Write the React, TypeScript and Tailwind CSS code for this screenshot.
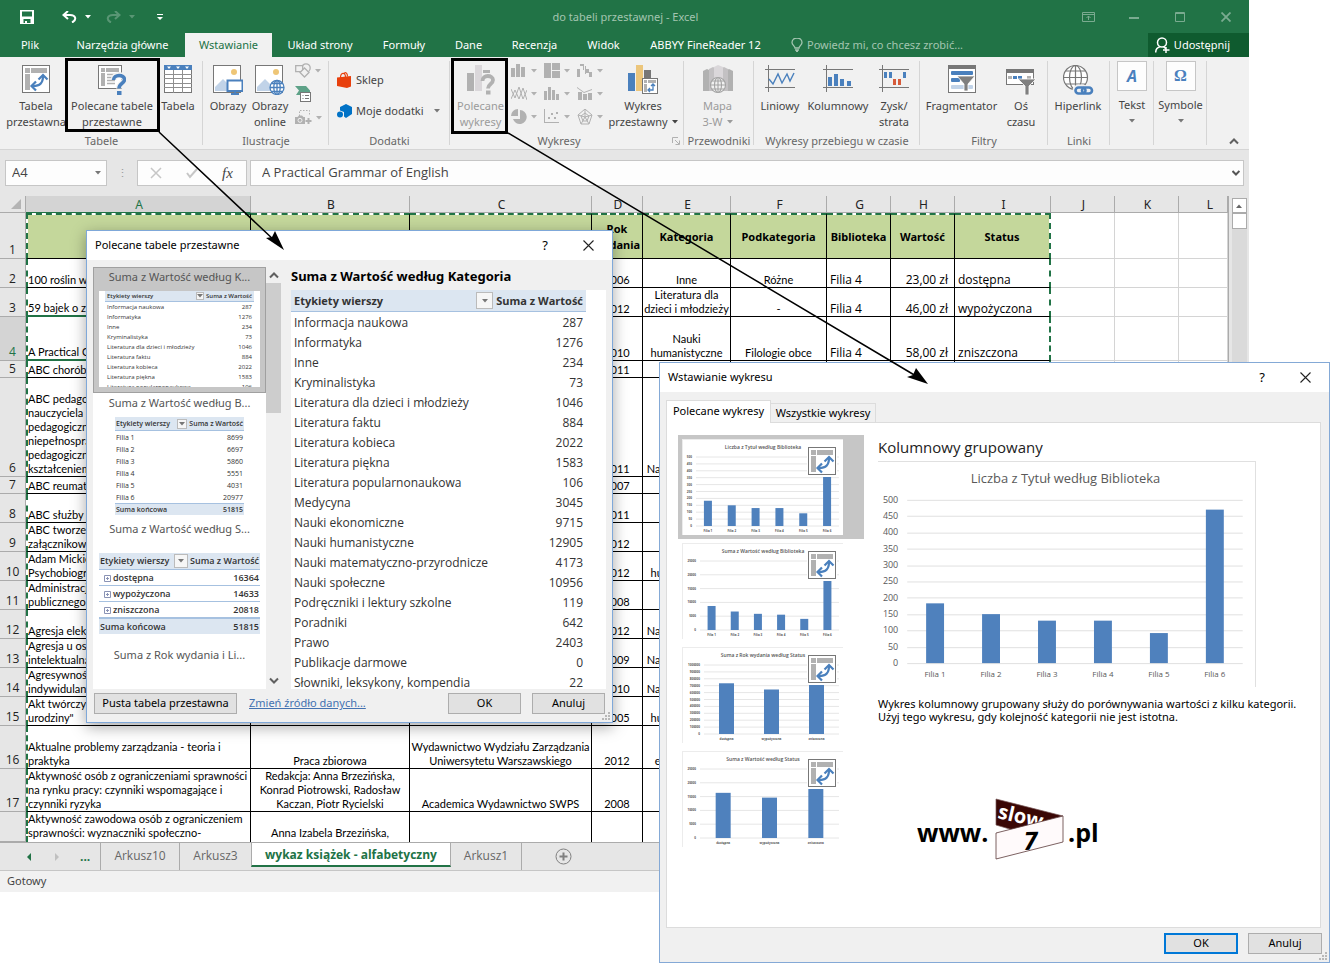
import { Fragment, type ReactNode } from "react";
import clsx from "clsx";

const BLUE = "#4a80bd";
const GRAY = "#777777";

/* ---------- small shared bits ---------- */

function Caret({ className }: { className?: string }) {
  return (
    <svg viewBox="0 0 6 4" className={clsx("h-1 w-1.5 shrink-0", className)} fill="currentColor">
      <path d="M0 0h6L3 3.5z" />
    </svg>
  );
}

function Chevron({ up, className }: { up?: boolean; className?: string }) {
  return (
    <svg viewBox="0 0 10 8" className={clsx("h-2 w-2.5 shrink-0", className)} fill="none" stroke="#606060" strokeWidth="2">
      <path d={up ? "M1 6.5 5 2.5l4 4" : "M1 1.5 5 5.5l4-4"} />
    </svg>
  );
}

function CloseIcon() {
  return (
    <svg viewBox="0 0 11 11" className="h-[11px] w-[11px]" stroke="#222" strokeWidth="1.1">
      <path d="M.5.5l10 10M10.5.5l-10 10" />
    </svg>
  );
}

function Grip() {
  return (
    <svg viewBox="0 0 8 8" className="absolute right-0.5 bottom-0.5 h-2 w-2" fill="#b8b8b8">
      <path d="M6 0h2v2H6zM3 3h2v2H3zM6 3h2v2H6zM0 6h2v2H0zM3 6h2v2H3zM6 6h2v2H6z" />
    </svg>
  );
}

/* ---------- ribbon icons ---------- */

function PivotIcon({ className }: { className?: string }) {
  return (
    <svg viewBox="0 0 28 28" className={clsx("h-7 w-7", className)}>
      <rect x=".5" y=".5" width="27" height="27" fill="#fff" stroke={GRAY} />
      <path d="M3 3h5v5H3zM9 3h16v5H9zM3 9h5v16H3z" fill="#b1b1b1" />
      <path d="M11 21c7 0 10-3 10-10" fill="none" stroke={BLUE} strokeWidth="2.2" />
      <path d="M14 16.500 9.500 21l4.500 4.500M16.500 14.500 21 10l4.500 4.500" fill="none" stroke={BLUE} strokeWidth="2.2" />
    </svg>
  );
}

function PivotHelpIcon() {
  return (
    <svg viewBox="0 0 28 30" className="h-[30px] w-7">
      <rect x=".5" y=".5" width="23" height="23" fill="#fff" stroke={GRAY} />
      <path d="M3 3h4v4H3zM8 3h13v4H8zM3 8h4v13H3z" fill="#b1b1b1" />
      <path d="M9 9.500h12M9 12.500h8M9 15.500h8M9 18.500h8" stroke="#b1b1b1" strokeWidth="1.500" />
      <path d="M15.500 15c0-7 11-6 11-.5 0 4-5.500 4-5.500 9" fill="none" stroke="#f1f1f1" strokeWidth="6" />
      <path d="M15.500 15c0-6 11-6 11-.5 0 4-5.500 4-5.500 9" fill="none" stroke={BLUE} strokeWidth="3.600" />
      <rect x="19" y="26" width="4.500" height="4" fill={BLUE} />
    </svg>
  );
}

function TableIcon() {
  return (
    <svg viewBox="0 0 28 28" className="h-7 w-7">
      <rect x=".5" y=".5" width="27" height="27" fill="#fff" stroke={GRAY} />
      <path d="M0 0h28v5H0z" fill={BLUE} />
      <path d="M3 1.500h4L5 4zM12 1.500h4L14 4zM21 1.500h4L23 4z" fill="#fff" />
      <path d="M9.500 5v23M18.500 5v23M0 9.500h28M0 13.500h28M0 18.500h28M0 22.500h28" stroke="#8f8f8f" />
    </svg>
  );
}

function PictureIcon({ online }: { online?: boolean }) {
  return (
    <svg viewBox="0 0 30 30" className="h-[30px] w-[30px]">
      <rect x=".5" y=".5" width="27" height="27" fill="#fff" stroke={GRAY} />
      <path d="M2 26v-4l8-8 8 8v4z" fill="#c1d3e8" />
      <circle cx="21" cy="7" r="3" fill="#eec677" />
      {online ? (
        <g fill="#fff" stroke={BLUE} strokeWidth="1.300">
          <circle cx="22" cy="22.500" r="7" />
          <ellipse cx="22" cy="22.500" rx="3.200" ry="7" />
          <path d="M15 22.500h14M16.500 18.500h11M16.500 26.500h11M22 15.500v14" />
        </g>
      ) : (
        <g>
          <rect x="14.500" y="15.500" width="15" height="10.500" fill="#fff" stroke={BLUE} strokeWidth="2" />
          <path d="M18 29h8M22 26v3" stroke={BLUE} strokeWidth="2" />
        </g>
      )}
    </svg>
  );
}

function ShapesIcon() {
  return (
    <svg viewBox="0 0 16 15" className="h-[15px] w-4" fill="#f1f1f1" stroke="#b1b1b1" strokeWidth="1.300">
      <circle cx="11" cy="5" r="4.200" />
      <path d="M.7 2.700h7v6h-7z" />
      <path d="m9.500 5 4.500 4.500-4.500 4.500L5 9.500z" />
    </svg>
  );
}

function SmartArtIcon() {
  return (
    <svg viewBox="0 0 17 16" className="h-4 w-[17px]">
      <path d="M0 0h11l4 4.500V6H5v3H1l3-4.500z" fill="#5ea288" />
      <rect x="5.500" y="6.500" width="10" height="9" fill="#fff" stroke={GRAY} />
      <path d="M7.500 9.500h1M7.500 12.500h1M10 9.500h4M10 12.500h4" stroke={GRAY} />
    </svg>
  );
}

function ScreenshotIcon() {
  return (
    <svg viewBox="0 0 17 16" className="h-4 w-[17px]">
      <path d="M4.500 6V.5h10V6" fill="none" stroke="#b1b1b1" strokeDasharray="1.500 1.500" />
      <path d="M0 7h2.500L4 5.500h3L8.500 7H10v7H0z" fill="#b1b1b1" />
      <circle cx="5" cy="10.300" r="2" fill="#b1b1b1" stroke="#f1f1f1" />
      <path d="M10.500 11h6M13.500 8v6" stroke="#b1b1b1" strokeWidth="2" />
    </svg>
  );
}

function StoreIcon() {
  return (
    <svg viewBox="0 0 15 16" className="h-4 w-[15px]">
      <path d="M0 5.500 14 4v10.500L10 16 0 14z" fill="#e8400d" />
      <path d="M3.500 6c0-6 5-6 5-1M6.500 2c2-2.500 4-1 4 2.500" fill="none" stroke="#e8400d" strokeWidth="1.200" />
    </svg>
  );
}

function AddinsIcon() {
  return (
    <svg viewBox="0 0 15 14" className="h-3.5 w-[15px]" fill="#0072c6">
      <path d="M3 3 9 0l6 3v7l-6 4-2-1.500V8L3 6.500z" />
      <circle cx="3" cy="10.500" r="3" />
    </svg>
  );
}

function ChartHelpIcon() {
  return (
    <svg viewBox="0 0 28 30" className="h-[30px] w-7">
      <path d="M0 8h7v18H0z" fill="#b1b1b1" />
      <path d="M8 0h7v26H8z" fill="#dad7da" />
      <path d="M16 5h7v3h-7z" fill="#b1b1b1" />
      <path d="M15.500 16c0-7 10.500-6 10.500-1 0 4-5 4-5 8.500" fill="none" stroke="#b1b1b1" strokeWidth="3.800" />
      <rect x="19" y="25.500" width="4.500" height="4" fill="#b1b1b1" />
    </svg>
  );
}

function PivotChartIcon() {
  return (
    <svg viewBox="0 0 31 29" className="h-[29px] w-[31px]">
      <path d="M0 8h7v18H0z" fill={BLUE} />
      <path d="M8 0h7v26H8z" fill="#ecc67c" />
      <path d="M16 5h7v9h-7z" fill={GRAY} />
      <rect x="14.500" y="13.500" width="15" height="15" fill="#fff" stroke={GRAY} />
      <path d="M16 15h3v3h-3zM20 15h8v3h-8zM16 19h3v8h-3z" fill="#b1b1b1" />
      <path d="M20 25h5v-6M22 23l-2 2 2 2M23 21l2-2 2 2" fill="none" stroke={BLUE} strokeWidth="1.300" />
    </svg>
  );
}

function MapIcon() {
  return (
    <svg viewBox="0 0 30 29" className="h-[29px] w-[30px]">
      <path d="M0 6l4-2 4 2v20H0zM22 6l4-2 4 2v20h-8z" fill="#b1b1b1" />
      <path d="M6 4l4-2 4 2v22H6zM17 4l4-2 4 2v22h-8z" fill="#c3c1c3" />
      <path d="M11 2l4-2 5 2v22h-9z" fill="#dad7da" />
      <g fill="#f1f1f1" stroke="#a3a3a3" strokeWidth="1.100">
        <circle cx="15" cy="20" r="7.500" />
        <ellipse cx="15" cy="20" rx="3.500" ry="7.500" />
        <path d="M7.500 20h15M9 16h12M9 24h12M15 12.500v15" />
      </g>
    </svg>
  );
}

function SparkIcon({ kind }: { kind: "line" | "column" | "winloss" }) {
  return (
    <svg viewBox="0 0 30 27" className="h-[27px] w-[30px]">
      <path d="M0 4.500h30M0 22.500h30M3.500 0v27" stroke={GRAY} fill="none" />
      {kind === "line" && <path d="m4 14 4 5 5-10 4 9 5-9 3 7 4-8" fill="none" stroke={BLUE} strokeWidth="1.400" />}
      {kind === "column" && <path d="M5 12h4v9H5zM11 9h4v12h-4zM17 14h4v7h-4zM24 16h4v5h-4z" fill={BLUE} />}
      {kind === "winloss" && (
        <g>
          <path d="M5 7h3v6H5zM10 7h3v6h-3zM24 7h3v6h-3z" fill={BLUE} />
          <path d="M14 14h3v6h-3zM19 14h3v6h-3z" fill="#d65b3a" />
        </g>
      )}
    </svg>
  );
}

function SlicerIcon() {
  return (
    <svg viewBox="0 0 28 28" className="h-7 w-7">
      <rect x=".5" y=".5" width="27" height="27" fill="#fff" stroke={GRAY} />
      <path d="M0 0h28v4H0z" fill={GRAY} />
      <rect x="3" y="6" width="22" height="4" rx="1" fill={BLUE} />
      <rect x="3" y="13" width="9" height="4" rx="1" fill={BLUE} />
      <rect x="3" y="20" width="22" height="4" rx="1" fill="#c1d3e8" />
      <path d="M9 11h18l-7 8v7h-4v-7z" fill="#7f7f7f" stroke="#fff" strokeWidth=".8" />
    </svg>
  );
}

function TimelineIcon() {
  return (
    <svg viewBox="0 0 30 30" className="h-[30px] w-[30px]">
      <rect x=".5" y="4.500" width="27" height="15" fill="#fff" stroke={GRAY} />
      <path d="M0 4h28v4H0z" fill={GRAY} />
      <path d="M2 11h4v3H2zM21 11h4v3h-4z" fill="#b1b1b1" />
      <path d="M7 11h4v3H7zM12 11h4v3h-4z" fill={BLUE} />
      <path d="M12 14h18l-7 7v9h-4v-9z" fill="#7f7f7f" stroke="#fff" strokeWidth=".8" />
    </svg>
  );
}

function LinkIcon() {
  return (
    <svg viewBox="0 0 31 31" className="h-[31px] w-[31px]">
      <g fill="#fff" stroke={GRAY} strokeWidth="1.200">
        <circle cx="12.500" cy="12.500" r="12" />
        <ellipse cx="12.500" cy="12.500" rx="6" ry="12" fill="none" />
        <path d="M.5 12.500h24M2.500 6h20M2.500 19h20M12.500 .5v24" />
      </g>
      <g fill="none" strokeWidth="6" stroke="#f1f1f1">
        <rect x="12.500" y="22.500" width="10" height="6" rx="3" />
      </g>
      <g fill="none" stroke={BLUE} strokeWidth="2.600">
        <rect x="12.500" y="22.500" width="10" height="6" rx="3" />
        <rect x="19" y="22.500" width="10" height="6" rx="3" />
      </g>
    </svg>
  );
}

const chartGlyphs: ReactNode[] = [
  <path key="col" d="M0 5h4v9H0zM5 1h4v13H5zM10 4h4v10h-4z" />,
  <path key="tree" d="M0 0h7v15H0zM8 0h8v7H8zM8 8h8v7H8z" />,
  <path key="fall" d="M0 6h3v8H0zM3 1h4v6H6V3H3zM8 3h1v8H8zM9 6h3v4H9zM12 9h3v5h-3z" />,
  <path key="line" d="m0 13 4-9 4 9 4-11 4 12M0 3l4 9 4-11 4 12 4-9" fill="none" stroke="currentColor" />,
  <path key="hist" d="M0 5h3v9H0zM4 1h3v13H4zM8 4h3v10H8zM12 8h3v6h-3z" />,
  <path key="combo" d="M1 6h4v8H1zM6 8h4v6H6zM11 7h4v7h-4zM0 1l7 5 8-3v1L7 7 0 2z" />,
  <path key="pie" d="M7 0v7H0A7 7 0 0 1 7 0zM9 1a7 7 0 1 1-7 9h7z" />,
  <path key="xy" d="M1 0v13h14v1H0V0zM4 8h2v2H4zM7 4h2v2H7zM10 8h2v2h-2zM12 3h2v2h-2z" />,
  <path key="radar" d="m8 0 7 6-3 9H4L1 6zM8 4l4 3-2 5H6L4 7zM8 0v8l7-2M8 8l4 7M8 8l-4 7M8 8 1 6" fill="none" stroke="currentColor" />,
];

/* ---------- ribbon ---------- */

type RibbonButtonProps = { icon: ReactNode; label: string; width: string; muted?: boolean; caret?: boolean };

function RibbonButton({ icon, label, width, muted, caret }: RibbonButtonProps) {
  return (
    <button className={clsx("flex shrink-0 flex-col items-center pt-2", width, muted ? "text-[#9b9b9b]" : "text-[#444]")}>
      <span className="flex h-[33px] items-start">{icon}</span>
      <span className="leading-4 whitespace-pre">
        {label}
        {caret && <Caret className="mb-0.5 ml-1 inline-block" />}
      </span>
    </button>
  );
}

function Group({ title, width, launcher, children }: { title: string; width: string; launcher?: boolean; children: ReactNode }) {
  return (
    <section className={clsx("relative flex h-[92px] shrink-0 flex-col", width)}>
      <div className="flex flex-1">{children}</div>
      <div className="flex items-center">
        <h2 className="h-4 flex-1 text-center leading-4 whitespace-nowrap text-[#666]">{title}</h2>
        {launcher && (
          <button aria-label="Więcej opcji" className="mr-1 ml-1">
            <svg viewBox="0 0 8 8" className="h-2 w-2" fill="none" stroke="#b1b1b1"><path d="M.5 6V.5H6M3 3l4 4M7.500 3.500v4h-4" /></svg>
          </button>
        )}
      </div>
      <span className="absolute top-1 right-0 bottom-1 w-px bg-[#d5d5d5]" />
    </section>
  );
}

function Ribbon() {
  return (
    <div className="flex border-b border-[#d5d5d5] bg-[#f1f1f1]">
      <Group title="Tabele" width="w-[203px]">
        <RibbonButton width="ml-1.5 w-[60px]" label={"Tabela\nprzestawna"} icon={<PivotIcon />} />
        <RibbonButton width="w-[92px]" label={"Polecane tabele\nprzestawne"} icon={<PivotHelpIcon />} />
        <RibbonButton width="w-10" label="Tabela" icon={<TableIcon />} />
      </Group>
      <Group title="Ilustracje" width="w-[126px]">
        <RibbonButton width="ml-1 w-[42px]" label="Obrazy" icon={<PictureIcon />} />
        <RibbonButton width="w-[42px]" label={"Obrazy\nonline"} icon={<PictureIcon online />} />
        <div className="flex flex-col gap-2 pt-1.5 pl-1 text-[#b1b1b1]">
          <button className="flex items-center gap-1"><ShapesIcon /><Caret /></button>
          <button className="flex items-center gap-1"><SmartArtIcon /></button>
          <button className="flex items-center gap-1"><ScreenshotIcon /><Caret /></button>
        </div>
      </Group>
      <Group title="Dodatki" width="w-[121px]">
        <div className="flex flex-col gap-[15px] pt-[15px] pl-2 text-[#444]">
          <button className="flex h-4 items-center gap-1"><StoreIcon />Sklep</button>
          <button className="flex h-4 items-center gap-1 whitespace-nowrap"><AddinsIcon />Moje dodatki<Caret className="ml-1.5 text-[#777]" /></button>
        </div>
      </Group>
      <Group title="Wykresy" width="w-[234px]" launcher>
        <RibbonButton muted width="ml-0.5 w-[57px]" label={"Polecane\nwykresy"} icon={<ChartHelpIcon />} />
        <div className="grid h-[75px] w-[101px] shrink-0 grid-cols-3 pt-1.5 pl-0.5 text-[#b1b1b1]">
          {chartGlyphs.map((glyph, i) => (
            <button key={i} className="flex h-[23px] items-start gap-1">
              <svg viewBox="0 0 16 16" className="h-4 w-4" fill="currentColor">{glyph}</svg>
              <Caret className="mt-1.5" />
            </button>
          ))}
        </div>
        <RibbonButton caret width="w-[66px]" label={"Wykres\nprzestawny"} icon={<PivotChartIcon />} />
      </Group>
      <Group title="Przewodniki" width="w-[70px]">
        <RibbonButton muted caret width="w-[67px]" label={"Mapa\n3-W"} icon={<MapIcon />} />
      </Group>
      <Group title="Wykresy przebiegu w czasie" width="w-[166px]">
        <RibbonButton width="w-[52px]" label="Liniowy" icon={<SparkIcon kind="line" />} />
        <RibbonButton width="w-16" label="Kolumnowy" icon={<SparkIcon kind="column" />} />
        <RibbonButton width="w-12" label={"Zysk/\nstrata"} icon={<SparkIcon kind="winloss" />} />
      </Group>
      <Group title="Filtry" width="w-[128px]">
        <RibbonButton width="w-[83px]" label="Fragmentator" icon={<SlicerIcon />} />
        <RibbonButton width="w-9" label={"Oś\nczasu"} icon={<TimelineIcon />} />
      </Group>
      <Group title="Linki" width="w-[62px]">
        <RibbonButton width="w-[60px]" label="Hiperlink" icon={<LinkIcon />} />
      </Group>
      {[
        { label: "Tekst", glyph: "A", width: "w-11", font: "font-['Open_Sans'] italic" },
        { label: "Symbole", glyph: "Ω", width: "w-[53px]", font: "font-['Liberation_Serif']" },
      ].map((item) => (
        <Group key={item.label} title="" width={item.width}>
          <button className="flex w-full flex-col items-center gap-1.5 pt-1 text-[#444]">
            <span className={clsx("flex h-[30px] w-[30px] items-center justify-center border border-[#c6c6c6] bg-[#fdfdfd] text-base font-bold text-[#4a80bd]", item.font)}>
              {item.glyph}
            </span>
            <span className="leading-4">{item.label}</span>
            <Caret className="text-[#777]" />
          </button>
        </Group>
      ))}
      <div className="flex flex-1 items-end justify-end pr-2.5 pb-1">
        <button aria-label="Zwiń wstążkę"><Chevron up /></button>
      </div>
    </div>
  );
}

function TitleBar() {
  return (
    <div className="flex h-[33px] items-center bg-[#217346] text-white">
      <div className="flex flex-1 items-center pl-5">
        <svg viewBox="0 0 14 14" className="h-3.5 w-3.5"><path d="M0 0h14v14H0zM2 1.500v5h10v-5zM3.500 9v4H5v-2h2v2h3.500V9z" fill="#fff" fillRule="evenodd" /></svg>
        <svg viewBox="0 0 15 12" className="ml-7 h-3 w-[15px]" fill="none" stroke="#fff" strokeWidth="2"><path d="M6 0 1.500 4 6 8M2 4h6c6 0 7 5 2 7.500" /></svg>
        <Caret className="ml-2" />
        <svg viewBox="0 0 15 12" className="ml-[15px] h-3 w-[15px] opacity-25" fill="none" stroke="#fff" strokeWidth="2"><path d="m9 0 4.500 4L9 8M13 4H7C1 4 0 9 5 11.500" /></svg>
        <Caret className="ml-2 opacity-25" />
        <svg viewBox="0 0 6 6" className="ml-[22px] h-1.5 w-1.5" fill="#fff"><path d="M0 0h6v1H0zM0 3h6L3 6z" /></svg>
      </div>
      <p className="pt-0.5 text-[#a3c5b0]">do tabeli przestawnej - Excel</p>
      <div className="flex flex-1 items-center justify-end gap-[34px] pr-[18px] opacity-40">
        <svg viewBox="0 0 13 10" className="h-2.5 w-[13px]" fill="none" stroke="#fff"><path d="M.5.5h12v9H.5zM.5 2.500h12M6.500 8V4M4.500 6l2-2 2 2" /></svg>
        <svg viewBox="0 0 10 10" className="h-2.5 w-2.5" stroke="#fff" strokeWidth="2"><path d="M0 6h10" /></svg>
        <svg viewBox="0 0 10 10" className="ml-0.5 h-2.5 w-2.5" fill="none" stroke="#fff"><path d="M.5.5h9v9h-9zM0 1.500h10" /></svg>
        <svg viewBox="0 0 10 10" className="ml-0.5 h-2.5 w-2.5" stroke="#fff" strokeWidth="1.800"><path d="m.5.5 9 9m0-9-9 9" /></svg>
      </div>
    </div>
  );
}

const menuTabs = [
  { label: "Plik", width: "w-[60px]" },
  { label: "Narzędzia główne", width: "w-[125px]" },
  { label: "Wstawianie", width: "w-[87px]", active: true },
  { label: "Układ strony", width: "w-24" },
  { label: "Formuły", width: "w-[72px]" },
  { label: "Dane", width: "w-[57px]" },
  { label: "Recenzja", width: "w-[75px]" },
  { label: "Widok", width: "w-[63px]" },
  { label: "ABBYY FineReader 12", width: "w-[141px]" },
];

function MenuBar() {
  return (
    <nav className="flex h-6 bg-[#217346] text-white">
      {menuTabs.map((tab) => (
        <button key={tab.label} className={clsx("shrink-0 whitespace-nowrap", tab.width, tab.active && "bg-[#f1f1f1] text-[#217346]")}>
          {tab.label}
        </button>
      ))}
      <button className="ml-[15px] flex items-center gap-1 whitespace-nowrap text-[#a3c5b0]">
        <svg viewBox="0 0 12 14" className="h-3.5 w-3" fill="none" stroke="currentColor" strokeWidth="1.300"><path d="M4 10c0-2-3-3-3-5.500a5 4.500 0 0 1 10 0C11 7 8 8 8 10zM4 12h4M5 13.500h2" /></svg>
        Powiedz mi, co chcesz zrobić...
      </button>
      <button className="ml-auto flex items-center gap-1 bg-[#0f5b2f] pr-[19px] pl-[7px]">
        <svg viewBox="0 0 15 16" className="h-4 w-[15px]" fill="none" stroke="#fff" strokeWidth="1.500"><circle cx="7" cy="5.500" r="4.500" /><path d="M.7 15.500c0-3.500 2-5 4-5.500M8.500 9.500l2 2M11 10v6M8 13h6.500" /></svg>
        Udostępnij
      </button>
    </nav>
  );
}

function FormulaBar() {
  return (
    <div className="flex h-[46px] items-center gap-[3px] bg-[#e6e6e6] pr-[5px] pl-[5px] font-['Open_Sans',sans-serif] text-[#444]">
      <div className="flex h-[26px] w-[102px] items-center border border-[#c6c6c6] bg-[#fdfdfd] pr-1">
        <input aria-label="Pole nazwy" defaultValue="A4" className="w-full bg-transparent pl-1.5 text-[13px] outline-none" />
        <Caret className="w-2 text-[#777]" />
      </div>
      <span className="w-6 text-center text-[#999]">⋮</span>
      <div className="flex h-[26px] w-[110px] items-center gap-6 border border-[#c6c6c6] bg-[#fdfdfd] pl-3">
        <svg viewBox="0 0 12 12" className="h-3 w-3" stroke="#c6c6c6" strokeWidth="1.500"><path d="m1 1 10 10M11 1 1 11" /></svg>
        <svg viewBox="0 0 12 12" className="h-3 w-3" fill="none" stroke="#c6c6c6" strokeWidth="2"><path d="m1 6 3 4 7-8" /></svg>
        <button className="font-['Liberation_Serif'] text-[15px] italic">fx</button>
      </div>
      <div className="flex h-[26px] flex-1 items-center border border-[#c6c6c6] bg-[#fdfdfd] pr-[3px]">
        <input aria-label="Pasek formuły" defaultValue="A Practical Grammar of English" className="w-full bg-transparent pl-[11px] text-[13px] outline-none" />
        <svg viewBox="0 0 8 6" className="h-1.5 w-2" fill="none" stroke="#555" strokeWidth="2"><path d="m.5 1 3.500 3.500L7.500 1" /></svg>
      </div>
    </div>
  );
}

/* ---------- sheet ---------- */

type Row = { n: number; h: string; cells: string[] };

const headers = ["Tytuł", "Autor", "Wydawnictwo", "Rok\nwydania", "Kategoria", "Podkategoria", "Biblioteka", "Wartość", "Status"];

const rows: Row[] = [
  { n: 2, h: "h-[29px]", cells: ["100 roślin w Twoim ogrodzie", "", "", "2006", "Inne", "Różne", "Filia 4", "23,00 zł", "dostępna"] },
  { n: 3, h: "h-[29px]", cells: ["59 bajek o zwierzętach", "", "", "2012", "Literatura dla\ndzieci i młodzieży", "-", "Filia 4", "46,00 zł", "wypożyczona"] },
  { n: 4, h: "h-11", cells: ["A Practical Grammar of English", "", "", "2010", "Nauki\nhumanistyczne", "Filologie obce", "Filia 4", "58,00 zł", "zniszczona"] },
  { n: 5, h: "h-[17px]", cells: ["ABC chorób", "", "", "2011", "", "", "", "", ""] },
  { n: 6, h: "h-[99px]", cells: ["ABC pedagoga i\nnauczyciela\npedagogiczne\nniepełnosprawność\npedagogiczna\nkształceniem", "", "", "2011", "Nauki społeczne", "", "", "", ""] },
  { n: 7, h: "h-[17px]", cells: ["ABC reumatologii", "", "", "2007", "", "", "", "", ""] },
  { n: 8, h: "h-[29px]", cells: ["ABC służby cywilnej", "", "", "2011", "", "", "", "", ""] },
  { n: 9, h: "h-[29px]", cells: ["ABC tworzenia\nzałącznikowego", "", "", "2012", "", "", "", "", ""] },
  { n: 10, h: "h-[29px]", cells: ["Adam Mickiewicz\nPsychobiografia", "", "", "2012", "humanistyczne", "", "", "", ""] },
  { n: 11, h: "h-[29px]", cells: ["Administracja\npublicznego", "", "", "2008", "", "", "", "", ""] },
  { n: 12, h: "h-[29px]", cells: ["Agresja elektroniczna", "", "", "2012", "Nauki społeczne", "", "", "", ""] },
  { n: 13, h: "h-[29px]", cells: ["Agresja u osób\nintelektualną", "", "", "2009", "Nauki społeczne", "", "", "", ""] },
  { n: 14, h: "h-[29px]", cells: ["Agresywność\nindywidulany", "", "", "2010", "Nauki społeczne", "", "", "", ""] },
  { n: 15, h: "h-[29px]", cells: ["Akt twórczy\nurodziny\"", "", "", "2005", "humanistyczne", "", "", "", ""] },
  { n: 16, h: "h-[43px]", cells: ["Aktualne problemy zarządzania - teoria i\npraktyka", "Praca zbiorowa", "Wydawnictwo Wydziału Zarządzania\nUniwersytetu Warszawskiego", "2012", "ekonomiczne", "", "", "", ""] },
  { n: 17, h: "h-[43px]", cells: ["Aktywność osób z ograniczeniami sprawności\nna rynku pracy: czynniki wspomagające i\nczynniki ryzyka", "Redakcja: Anna Brzezińska,\nKonrad Piotrowski, Radosław\nKaczan, Piotr Rycielski", "Academica Wydawnictwo SWPS", "2008", "", "", "", "", ""] },
];

// width of the row-number column followed by columns A-K; L takes what is left
const colWidths = ["w-[26px]", "w-[225px]", "w-[159px]", "w-[182px]", "w-[51px]", "w-[88px]", "w-24", "w-16", "w-16", "w-24", "w-16", "w-16", ""];

function RowNumber({ n }: { n: number }) {
  return (
    <th
      scope="row"
      className={clsx(
        "border-r border-b border-[#ababab] p-0 align-bottom font-['Open_Sans',sans-serif] text-xs leading-4 font-normal",
        n === 4 ? "bg-[#d4d4d4] text-[#217346]" : "bg-[#e6e6e6] text-[#222]",
      )}
    >
      {n < 18 ? n : ""}
    </th>
  );
}

function EmptyCells() {
  return (
    <>
      {["J", "K", "L"].map((c) => (
        <td key={c} className="border-r border-b border-[#d4d4d4] p-0" />
      ))}
    </>
  );
}

function Sheet() {
  return (
    <div className="flex bg-[#e6e6e6]">
      <table className="w-full flex-1 table-fixed border-separate border-spacing-0 bg-white">
        <colgroup>
          {colWidths.map((w, i) => (
            <col key={i} className={w} />
          ))}
        </colgroup>
        <thead>
          <tr className="h-[17px]">
            <th className="border-r border-b border-[#ababab] bg-[#e6e6e6] p-0">
              <svg viewBox="0 0 10 10" className="mr-1 ml-auto h-2.5 w-2.5"><path d="M10 0v10H0z" fill="#b4b4b4" /></svg>
            </th>
            {"ABCDEFGHIJKL".split("").map((c) => (
              <th
                key={c}
                scope="col"
                className={clsx(
                  "border-r border-b pt-0.5 pr-0 pb-0 text-xs leading-[14px] font-normal",
                  c === "L" ? "pl-3.5" : "pl-0.5",
                  c === "A" ? "border-r-[#ababab] border-b-[#217346] bg-[#d4d4d4] text-[#217346]" : "border-[#ababab] bg-[#e6e6e6] text-[#222]",
                )}
              >
                {c}
              </th>
            ))}
          </tr>
        </thead>
        <tbody className="font-['Lato',sans-serif] text-[11px] leading-[14px] text-black">
          <tr className="h-[46px]">
            <RowNumber n={1} />
            {headers.map((h, i) => (
              <td
                key={h}
                className={clsx(
                  "border-t-2 border-r border-b border-black border-t-[#217346] bg-[#c4d79b] bg-clip-padding p-0 text-center font-['Noto_Sans',sans-serif] leading-4 font-bold whitespace-pre [border-top-style:dashed]",
                  i === 0 && "border-l-2 border-l-[#217346] [border-left-style:dashed]",
                  i === 8 && "border-r-2 border-r-[#217346] [border-right-style:dashed]",
                )}
              >
                {h}
              </td>
            ))}
            <EmptyCells />
          </tr>
          {rows.map((row) => (
            <tr key={row.n} className={row.h}>
              <RowNumber n={row.n} />
              {row.cells.map((text, i) => (
                <td
                  key={i}
                  className={clsx(
                    "overflow-hidden border-r border-b border-black p-0 align-bottom whitespace-pre",
                    i === 0 && "border-l-2 border-l-[#217346] [border-left-style:dashed]",
                    i === 0 && (row.n === 3 || row.n === 4) && "border-b-2 border-b-[#217346]",
                    i > 0 && i < 6 && "text-center",
                    i > 5 && "font-['Open_Sans',sans-serif] text-xs leading-[14px]",
                    i === 6 && "pl-[3px]",
                    i === 7 && "pr-1.5 text-right",
                    i === 8 && "border-r-2 border-r-[#217346] pl-[3px] [border-right-style:dashed]",
                  )}
                >
                  {text}
                </td>
              ))}
              <EmptyCells />
            </tr>
          ))}
          <tr className="h-[30px]">
            <RowNumber n={18} />
            <td className="border-r border-l-2 border-black border-l-[#217346] p-0 align-top whitespace-pre [border-left-style:dashed]">
              <div className="h-[30px] overflow-hidden">{"Aktywność zawodowa osób z ograniczeniem\nsprawności: wyznaczniki społeczno-\ndemograficzne"}</div>
            </td>
            <td className="border-r border-black p-0 text-center align-top whitespace-pre">
              <div className="h-[30px] overflow-hidden pt-3.5">{"Anna Izabela Brzezińska,\nKonrad Piotrowski"}</div>
            </td>
            {headers.slice(2).map((h) => (
              <td key={h} className="border-r border-black p-0" />
            ))}
            <EmptyCells />
          </tr>
        </tbody>
      </table>
      <div className="flex w-[21px] flex-col items-center border-l border-[#ababab] pt-0.5">
        <button aria-label="W górę" className="flex h-[15px] w-[15px] items-center justify-center border border-[#ababab] bg-white text-[#666]">
          <Caret className="rotate-180" />
        </button>
        <div className="w-[15px] flex-1 bg-[#dadada]">
          <div className="h-4 border border-[#ababab] bg-white" />
        </div>
      </div>
    </div>
  );
}

function SheetTabs() {
  return (
    <div className="flex h-7 border-t border-[#ababab] bg-[#e6e6e6] font-['Open_Sans',sans-serif] text-xs text-[#666]">
      <div className="flex w-[101px] items-center border-r border-[#ababab] pl-[27px]">
        <svg viewBox="0 0 4 8" className="h-2 w-1" fill="#217346"><path d="M4 0v8L0 4z" /></svg>
        <svg viewBox="0 0 4 8" className="ml-6 h-2 w-1" fill="#c0c0c0"><path d="M0 0v8l4-4z" /></svg>
        <span className="ml-[21px] font-bold text-[#217346]">...</span>
      </div>
      <button className="w-[79px] border-r border-[#ababab] pb-0.5">Arkusz10</button>
      <button className="w-[71px] pb-0.5">Arkusz3</button>
      <button className="mb-[3px] w-[200px] border-x border-b-2 border-x-[#ababab] border-b-[#217346] bg-white pt-0.5 font-bold whitespace-nowrap text-[#217346]">
        wykaz książek - alfabetyczny
      </button>
      <button className="w-[71px] border-r border-[#ababab] pb-0.5">Arkusz1</button>
      <button aria-label="Nowy arkusz" className="ml-[33px]">
        <svg viewBox="0 0 17 17" className="h-[17px] w-[17px]" fill="none" stroke="#808080"><circle cx="8.500" cy="8.500" r="7.500" /><path d="M4.500 8.500h8M8.500 4.500v8" strokeWidth="2" /></svg>
      </button>
    </div>
  );
}

/* ---------- recommended pivot tables ---------- */

type Item = [string, string];

const categories: Item[] = [
  ["Informacja naukowa", "287"],
  ["Informatyka", "1276"],
  ["Inne", "234"],
  ["Kryminalistyka", "73"],
  ["Literatura dla dzieci i młodzieży", "1046"],
  ["Literatura faktu", "884"],
  ["Literatura kobieca", "2022"],
  ["Literatura piękna", "1583"],
  ["Literatura popularnonaukowa", "106"],
  ["Medycyna", "3045"],
  ["Nauki ekonomiczne", "9715"],
  ["Nauki humanistyczne", "12905"],
  ["Nauki matematyczno-przyrodnicze", "4173"],
  ["Nauki społeczne", "10956"],
  ["Podręczniki i lektury szkolne", "119"],
  ["Poradniki", "642"],
  ["Prawo", "2403"],
  ["Publikacje darmowe", "0"],
  ["Słowniki, leksykony, kompendia", "22"],
];

const branches: Item[] = [["Filia 1", "8699"], ["Filia 2", "6697"], ["Filia 3", "5860"], ["Filia 4", "5551"], ["Filia 5", "4031"], ["Filia 6", "20977"]];
const statuses: Item[] = [["dostępna", "16364"], ["wypożyczona", "14633"], ["zniszczona", "20818"]];

const pivotSizes = {
  xs: { text: "text-[6px] leading-[10px]", head: "h-[11px]", row: "h-2.5", box: "h-2 w-2", pad: "px-0.5", first: "w-[58%]" },
  sm: { text: "text-[7px] leading-[11px]", head: "h-3.5", row: "h-3", box: "h-2.5 w-2.5", pad: "px-px", first: "w-[45%]" },
  md: { text: "text-[9px] leading-[14px] font-semibold", head: "h-[17px]", row: "h-4", box: "h-3.5 w-3.5", pad: "px-px", first: "w-[46%]" },
  lg: { text: "text-xs leading-[19px]", head: "h-[22px] text-[11px]", row: "h-5", box: "h-[17px] w-[17px]", pad: "px-[3px]", first: "w-[60%]" },
};

type PivotProps = { size: keyof typeof pivotSizes; items: Item[]; total?: boolean; expandable?: boolean };

function PivotTable({ size, items, total, expandable }: PivotProps) {
  const s = pivotSizes[size];
  const weight = size === "lg" ? "font-bold" : "font-semibold";
  return (
    <table className={clsx("w-full table-fixed border-separate border-spacing-0 font-['Open_Sans',sans-serif] whitespace-nowrap text-[#333]", s.text)}>
      <thead>
        <tr className={clsx("bg-[#dce6f1]", weight, s.head)}>
          <th className={clsx("border-b border-[#a6c1e0] py-0 text-left", weight, s.pad, s.first)}>Etykiety wierszy</th>
          <th className={clsx("border-b border-[#a6c1e0] py-0", weight, s.pad)}>
            <span className={clsx("flex items-center justify-end", size === "lg" ? "gap-[3px]" : "gap-0.5")}>
              <span className={clsx("flex shrink-0 items-center justify-center border border-[#bbb] bg-[#f6f6f6] text-[#777]", s.box)}>
                <Caret className={size === "lg" ? "w-2" : "w-1"} />
              </span>
              Suma z Wartość
            </span>
          </th>
        </tr>
      </thead>
      <tbody>
        {items.map(([name, value]) => (
          <tr key={name} className={s.row}>
            <td className={clsx("py-0", s.pad, expandable && "border-b border-[#a6c1e0]")}>
              {expandable && (
                <svg viewBox="0 0 7 7" className="mr-0.5 ml-1 inline h-[7px] w-[7px]" fill="none" stroke="#8a93b5"><path d="M.5.5h6v6h-6zM2 3.500h3M3.500 2v3" /></svg>
              )}
              {name}
            </td>
            <td className={clsx("py-0 text-right", s.pad, expandable && "border-b border-[#a6c1e0]")}>{value}</td>
          </tr>
        ))}
        {total && (
          <tr className={clsx("bg-[#dce6f1]", weight, s.row)}>
            <td className={clsx("border-t border-[#a6c1e0] py-0", s.pad)}>Suma końcowa</td>
            <td className={clsx("border-t border-[#a6c1e0] py-0 text-right", s.pad)}>51815</td>
          </tr>
        )}
      </tbody>
    </table>
  );
}

function DialogTitle({ children }: { children: string }) {
  return (
    <div className="flex h-[29px] shrink-0 items-center bg-white pl-2 text-black">
      <h2 className="flex-1">{children}</h2>
      <button className="mr-[35px] text-[13px]">?</button>
      <button aria-label="Zamknij" className="mr-[18px]"><CloseIcon /></button>
    </div>
  );
}

function DialogButton({ children, width, primary }: { children: string; width: string; primary?: boolean }) {
  return (
    <button className={clsx("h-[21px] bg-[#e1e1e1] text-black", width, primary ? "border-2 border-[#0078d7]" : "border border-[#adadad]")}>
      {children}
    </button>
  );
}

function PreviewTitle({ children }: { children: string }) {
  return <h3 className="h-[23px] text-center leading-[17px] whitespace-nowrap text-[#555]">{children}</h3>;
}

function PivotDialog() {
  return (
    <section className="absolute top-[230px] left-[86px] h-[493px] w-[527px] overflow-hidden border border-[#7fa8d9] bg-[#f0f0f0] shadow-[0_4px_14px_rgba(0,0,0,0.35)]">
      <DialogTitle>Polecane tabele przestawne</DialogTitle>
      <div className="flex pt-[7px] pr-1.5 pl-1.5">
        <div className="h-[422px] w-[173px] shrink-0 overflow-hidden bg-white">
          <div className="h-[126px] border border-[#a0a0a0] bg-[#c6c6c6] px-[5px]">
            <PreviewTitle>Suma z Wartość według K...</PreviewTitle>
            <div className="h-24 overflow-hidden bg-white px-1.5">
              <PivotTable size="xs" items={categories} />
            </div>
          </div>
          <div className="h-[126px] pt-px">
            <PreviewTitle>Suma z Wartość według B...</PreviewTitle>
            <div className="px-[22px]">
              <PivotTable size="sm" items={branches} total />
            </div>
          </div>
          <div className="h-[126px] px-1.5 pt-px">
            <PreviewTitle>Suma z Wartość według S...</PreviewTitle>
            <div className="pt-2.5">
              <PivotTable size="md" items={statuses} total expandable />
            </div>
          </div>
          <div className="pt-px">
            <PreviewTitle>Suma z Rok wydania i Li...</PreviewTitle>
          </div>
        </div>
        <div className="flex h-[422px] w-[15px] shrink-0 flex-col items-center">
          <Chevron up className="my-1" />
          <div className="h-[130px] w-full bg-[#cdcdcd]" />
          <Chevron className="mt-auto mb-1" />
        </div>
        <div className="ml-2.5 flex-1">
          <h3 className="h-[23px] text-[13px] leading-[19px] font-bold whitespace-nowrap text-black">Suma z Wartość według Kategoria</h3>
          <div className="h-[399px] overflow-hidden bg-white pr-5">
            <PivotTable size="lg" items={categories} />
          </div>
        </div>
      </div>
      <div className="flex items-center pt-1 pr-[7px] pl-[7px]">
        <DialogButton width="w-[143px]">Pusta tabela przestawna</DialogButton>
        <a href="#zrodlo" className="ml-3 text-[#4472b0] underline">Zmień źródło danych...</a>
        <div className="ml-auto flex gap-[11px]">
          <DialogButton width="w-[73px]">OK</DialogButton>
          <DialogButton width="w-[73px]">Anuluj</DialogButton>
        </div>
      </div>
      <Grip />
    </section>
  );
}

/* ---------- insert chart ---------- */

type Chart = { title: string; max: number; step: number; left: number; bar: number; values: number[]; labels: string[] };

const branchLabels = branches.map(([name]) => name);
const statusLabels = statuses.map(([name]) => name);

const charts: Chart[] = [
  { title: "Liczba z Tytuł według Biblioteka", max: 500, step: 50, left: 13, bar: 8, values: [183, 150, 130, 130, 92, 470], labels: branchLabels },
  { title: "Suma z Wartość według Biblioteka", max: 25000, step: 5000, left: 17, bar: 8, values: [8699, 6697, 5860, 5551, 4031, 20977], labels: branchLabels },
  { title: "Suma z Rok wydania według Status", max: 1000000, step: 100000, left: 21, bar: 15, values: [735000, 645000, 890000], labels: statusLabels },
  { title: "Suma z Wartość według Status", max: 25000, step: 5000, left: 17, bar: 15, values: [16364, 14633, 20818], labels: statusLabels },
];

const ticks = (max: number, step: number) => Array.from({ length: max / step + 1 }, (_, i) => i * step);

function ChartThumb({ chart }: { chart: Chart }) {
  const top = 17;
  const bottom = 86;
  const slot = (156 - chart.left) / chart.values.length;
  const y = (v: number) => bottom - (v / chart.max) * (bottom - top);
  return (
    <div className="relative h-24 w-[161px] border-t border-l border-[#ececec] bg-white">
      <svg viewBox="0 0 161 96" className="h-24 w-[161px]" fontFamily="Open Sans, sans-serif" fill="#555">
        <text x="80" y="9" fontSize="5" fontWeight="600" textAnchor="middle">{chart.title}</text>
        {ticks(chart.max, chart.step).map((t) => (
          <Fragment key={t}>
            <path d={`M${chart.left} ${y(t)}H156`} stroke="#e6e6e6" />
            <text x={chart.left - 4} y={y(t) + 1} fontSize="3" fontWeight="700" textAnchor="end">{t}</text>
          </Fragment>
        ))}
        {chart.values.map((v, i) => (
          <Fragment key={i}>
            <rect x={chart.left + slot * (i + 0.5) - chart.bar / 2} y={y(v)} width={chart.bar} height={bottom - y(v)} fill="#4f81bd" />
            <text x={chart.left + slot * (i + 0.5)} y="92" fontSize="3" fontWeight="700" textAnchor="middle">{chart.labels[i]}</text>
          </Fragment>
        ))}
      </svg>
      <span className="absolute top-1.5 right-1.5 bg-white p-px pb-0.5"><PivotIcon /></span>
    </div>
  );
}

function MainChart() {
  const chart = charts[0];
  const y = (v: number) => 202 - (v / 500) * 164;
  return (
    <svg viewBox="0 0 378 226" className="h-[226px] w-[378px] border-t border-r border-[#e0e0e0]" fontFamily="Open Sans, sans-serif" fill="#595959">
      <text x="188" y="21" fontSize="13" textAnchor="middle">{chart.title}</text>
      {ticks(500, 50).map((t) => (
        <Fragment key={t}>
          <path d={`M29 ${Math.round(y(t)) + 0.5}H366`} stroke="#e0e0e0" />
          <text x="20" y={y(t) + 3} fontSize="9" textAnchor="end">{t}</text>
        </Fragment>
      ))}
      {chart.values.map((v, i) => (
        <Fragment key={i}>
          <rect x={48 + i * 56.2} y={y(v)} width="18" height={202 - y(v)} fill="#4f81bd" />
          <text x={57 + i * 56.2} y="216" fontSize="8" textAnchor="middle">{chart.labels[i]}</text>
        </Fragment>
      ))}
    </svg>
  );
}

function Logo() {
  return (
    <svg viewBox="0 0 184 64" className="mt-[74px] ml-[39px] h-16 w-[184px]" fontFamily="Open Sans, sans-serif" fontWeight="700">
      <text x="0" y="45" fontSize="25">www.</text>
      <path d="M79 2v26l17 5 50-14z" fill="#3a0705" stroke="#7a5a5a" strokeWidth=".7" />
      <text x="80" y="21" fontSize="20" fill="#fff" transform="rotate(13 80 21)">slow</text>
      <path d="M79 36l67-17v26L79 62z" fill="#fffafb" stroke="#5a3a3a" strokeWidth=".8" />
      <text x="107" y="53" fontSize="25" transform="rotate(-2 107 53)" fontStyle="italic">7</text>
      <text x="151" y="45" fontSize="25">.pl</text>
    </svg>
  );
}

function ChartDialog() {
  return (
    <section className="absolute top-[362px] right-0 flex h-[601px] w-[671px] flex-col border border-[#84a9d6] bg-[#f0f0f0]">
      <DialogTitle>Wstawianie wykresu</DialogTitle>
      <div role="tablist" className="mt-2 ml-1.5 flex items-end text-black">
        <button role="tab" aria-selected="true" className="z-10 -mb-px h-[23px] w-[105px] border border-b-0 border-[#dcdcdc] bg-white pb-0.5">Polecane wykresy</button>
        <button role="tab" aria-selected="false" className="h-[19px] w-[105px] border border-b-0 border-l-0 border-[#dcdcdc]">Wszystkie wykresy</button>
      </div>
      <div className="mr-2 ml-1.5 flex flex-1 border border-[#dcdcdc] bg-white pl-[11px]">
        <div className="w-[186px] shrink-0 pt-3">
          {charts.map((chart, i) => (
            <div key={chart.title} className={clsx("h-[104px] p-1", i === 0 && "bg-[#c6c6c6]")}>
              <ChartThumb chart={chart} />
            </div>
          ))}
        </div>
        <div className="ml-3.5 text-black">
          <h3 className="pt-3.5 pb-1 font-['Open_Sans',sans-serif] text-[15px] leading-5 text-[#222]">Kolumnowy grupowany</h3>
          <MainChart />
          <p className="pt-2.5 leading-[13px] whitespace-nowrap">
            Wykres kolumnowy grupowany służy do porównywania wartości z kilku kategorii.
            <br />
            Użyj tego wykresu, gdy kolejność kategorii nie jest istotna.
          </p>
          <Logo />
        </div>
      </div>
      <div className="flex justify-end gap-2.5 pt-[5px] pr-[7px] pb-2">
        <DialogButton primary width="w-[74px]">OK</DialogButton>
        <DialogButton width="w-[74px]">Anuluj</DialogButton>
      </div>
      <Grip />
    </section>
  );
}

// frames and arrows that point from the ribbon to the two dialogs
function Callouts() {
  return (
    <svg viewBox="0 0 940 400" className="pointer-events-none absolute top-0 left-0 h-[400px] w-[940px]" fill="none" stroke="#000">
      <rect x="66.500" y="59.500" width="92" height="71" strokeWidth="3" />
      <rect x="452.500" y="59.500" width="54" height="73" strokeWidth="3" />
      <path d="M159 132 275 241M508 133l408 243" strokeWidth="1.500" />
      <path d="m284 250-18-12 6-1 3-6zM928 384l-21-7 6-2 3-7z" fill="#000" stroke="none" />
    </svg>
  );
}

export default function App() {
  return (
    <div className="relative min-h-screen overflow-hidden bg-white font-['Noto_Sans',sans-serif] text-[11px]">
      <main className="mr-[81px]">
        <TitleBar />
        <MenuBar />
        <Ribbon />
        <FormulaBar />
        <Sheet />
        <SheetTabs />
        <footer className="h-[22px] border-t border-[#c6c6c6] bg-[#f1f1f1] pl-[7px] leading-5 text-[#444]">Gotowy</footer>
      </main>
      <PivotDialog />
      <ChartDialog />
      <Callouts />
    </div>
  );
}
